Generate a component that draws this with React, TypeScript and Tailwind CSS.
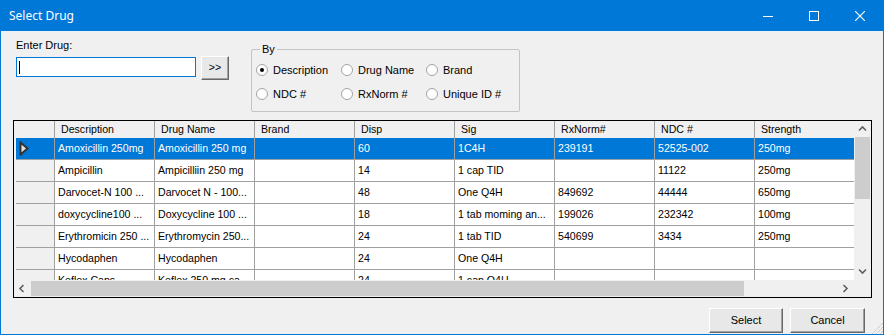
import React from "react";

const cols = ["Description", "Drug Name", "Brand", "Disp", "Sig", "RxNorm#", "NDC #", "Strength"];
const rows: string[][] = [
  ["Amoxicillin 250mg", "Amoxicillin 250 mg", "", "60", "1C4H", "239191", "52525-002", "250mg"],
  ["Ampicillin", "Ampicilliin 250 mg", "", "14", "1 cap TID", "", "11122", "250mg"],
  ["Darvocet-N 100 ...", "Darvocet N - 100...", "", "48", "One Q4H", "849692", "44444", "650mg"],
  ["doxycycline100 ...", "Doxycycline 100 ...", "", "18", "1 tab moming an...", "199026", "232342", "100mg"],
  ["Erythromicin 250 ...", "Erythromycin 250...", "", "24", "1 tab TID", "540699", "3434", "250mg"],
  ["Hycodaphen", "Hycodaphen", "", "24", "One Q4H", "", "", ""],
  ["Keflex Caps", "Keflex 250 mg ca...", "", "24", "1 cap Q4H", "", "", ""],
];

function Radio({ label, checked }: { label: string; checked?: boolean }) {
  return (
    <div className="flex items-center gap-[5px] h-[16px]">
      <svg width="12" height="12" viewBox="0 0 12 12" className="shrink-0">
        <circle cx="6" cy="6" r="5.5" fill="#ffffff" stroke="#a2a2a2" />
        {checked && <circle cx="6" cy="6" r="2" fill="#000000" />}
      </svg>
      <span className="leading-[13px]">{label}</span>
    </div>
  );
}

function Chevron({ dir }: { dir: "up" | "down" | "left" | "right" }) {
  const pts =
    dir === "up"
      ? "1,5.5 4.5,2 8,5.5"
      : dir === "down"
      ? "1,2.5 4.5,6 8,2.5"
      : dir === "left"
      ? "5.5,1 2,4.5 5.5,8"
      : "2.5,1 6,4.5 2.5,8";
  return (
    <svg width="9" height="9" viewBox="0 0 9 9">
      <polyline points={pts} fill="none" stroke="#606060" strokeWidth="1.6" />
    </svg>
  );
}

export default function App() {
  return (
    <div className="relative w-[884px] h-[335px] border border-[#0078d7] bg-[#f0f0f0] flex flex-col overflow-hidden font-['Liberation_Sans',Arial,sans-serif] text-[10.6px] text-black">
      {/* Title bar */}
      <div className="h-[30px] shrink-0 bg-[#0078d7] flex items-center">
        <div className="pl-[8px] flex-1 text-white text-[12px] font-['Segoe_UI','Noto_Sans',sans-serif]">Select Drug</div>
        <div className="w-[46px] h-[30px] flex items-center justify-center">
          <svg width="10" height="10" viewBox="0 0 10 10">
            <line x1="0" y1="5.5" x2="10" y2="5.5" stroke="#ffffff" strokeWidth="1" />
          </svg>
        </div>
        <div className="w-[46px] h-[30px] flex items-center justify-center">
          <svg width="10" height="10" viewBox="0 0 10 10">
            <rect x="0.5" y="0.5" width="9" height="9" fill="none" stroke="#ffffff" strokeWidth="1" />
          </svg>
        </div>
        <div className="w-[46px] h-[30px] flex items-center justify-center">
          <svg width="10" height="10" viewBox="0 0 10 10">
            <line x1="0" y1="0" x2="10" y2="10" stroke="#ffffff" strokeWidth="1.1" />
            <line x1="10" y1="0" x2="0" y2="10" stroke="#ffffff" strokeWidth="1.1" />
          </svg>
        </div>
      </div>

      {/* Top section */}
      <div className="flex mt-[8px] ml-[15px]">
        <div className="flex flex-col">
          <div className="h-[13px] leading-[13px] text-[11px]">Enter Drug:</div>
          <div className="flex items-start mt-[4px]">
            <div className="mt-[1px] w-[180px] h-[20px] bg-white border border-[#0078d7] flex items-center pl-[2px]">
              <div className="w-px h-[13px] bg-black" />
            </div>
            <div className="ml-[5px] w-[28px] h-[24px] flex items-center justify-center bg-[#e8e8e8] border border-t-white border-l-white border-r-[#696969] border-b-[#696969] shadow-[inset_-1px_-1px_0_#a0a0a0]">
              &gt;&gt;
            </div>
          </div>
        </div>
        <div className="relative ml-[22px] mt-[10px] w-[269px] h-[63px] border border-[#c4c4c4] rounded-[2px] text-[11px]">
          <div className="absolute left-[8px] top-[-7px] px-[2px] bg-[#f0f0f0] leading-[13px]">By</div>
          <div className="grid grid-cols-[85px_85px_85px] gap-y-[8px] pt-[12px] pl-[4px]">
            <Radio label="Description" checked />
            <Radio label="Drug Name" />
            <Radio label="Brand" />
            <Radio label="NDC #" />
            <Radio label="RxNorm #" />
            <Radio label="Unique ID #" />
          </div>
        </div>
      </div>

      {/* Grid */}
      <div className="mt-[8px] ml-[12px] w-[859px] h-[178px] shrink-0 border border-black flex flex-col">
        <div className="h-[159px] flex">
          <div className="w-[840px] h-[159px] overflow-hidden bg-white">
            <div className="flex h-[17px] bg-[#f0f0f0]">
              <div className="w-[41px] shrink-0 border-r border-[#a0a0a0]" />
              {cols.map((c) => (
                <div key={c} className="w-[100px] shrink-0 border-r border-[#a0a0a0] pl-[6px] leading-[17px] whitespace-nowrap overflow-hidden">
                  {c}
                </div>
              ))}
            </div>
            {rows.map((r, i) => {
              const sel = i === 0;
              return (
                <div key={i} className={`flex h-[22px] ${sel ? "text-white" : "text-black"}`}>
                  <div className="w-[41px] shrink-0 border-r border-[#a0a0a0] pl-[2px] bg-[#f0f0f0]">
                    <div className={`h-full border-b border-[#a0a0a0] flex items-center pl-[3px] ${sel ? "bg-[#0078d7]" : ""}`}>
                      {sel && (
                        <svg width="10" height="15" viewBox="0 0 10 15" className="shrink-0 block">
                          <polygon points="1.5,1.5 8.5,7.5 1.5,13.5" fill="#e4e4e4" stroke="#333333" strokeWidth="2" strokeLinejoin="miter" />
                        </svg>
                      )}
                    </div>
                  </div>
                  {r.map((v, j) => (
                    <div
                      key={j}
                      className={`w-[100px] shrink-0 border-r border-b border-[#a0a0a0] pl-[3px] leading-[21px] whitespace-nowrap overflow-hidden ${sel ? "bg-[#0078d7]" : "bg-white"}`}
                    >
                      {v}
                    </div>
                  ))}
                </div>
              );
            })}
          </div>
          <div className="w-[17px] h-[159px] bg-[#f0f0f0] flex flex-col">
            <div className="h-[16px] flex items-center justify-center">
              <Chevron dir="up" />
            </div>
            <div className="h-[62px] mx-[1px] bg-[#cdcdcd]" />
            <div className="flex-1" />
            <div className="h-[17px] flex items-center justify-center">
              <Chevron dir="down" />
            </div>
          </div>
        </div>
        <div className="h-[17px] flex">
          <div className="w-[840px] flex bg-[#f0f0f0]">
            <div className="w-[17px] flex items-center justify-center">
              <Chevron dir="left" />
            </div>
            <div className="w-[713px] my-[1px] bg-[#cdcdcd]" />
            <div className="flex-1" />
            <div className="w-[17px] flex items-center justify-center">
              <Chevron dir="right" />
            </div>
          </div>
          <div className="w-[17px] bg-[#f0f0f0]" />
        </div>
      </div>

      {/* Buttons */}
      <div className="mt-[10px] flex justify-end gap-[7px] pr-[18px] text-[11px]">
        <div className="w-[74px] h-[25px] flex items-center justify-center bg-[#e8e8e8] border border-t-white border-l-white border-r-[#696969] border-b-[#696969] shadow-[inset_-1px_-1px_0_#a0a0a0]">
          Select
        </div>
        <div className="w-[75px] h-[25px] flex items-center justify-center bg-[#e8e8e8] border border-t-white border-l-white border-r-[#696969] border-b-[#696969] shadow-[inset_-1px_-1px_0_#a0a0a0]">
          Cancel
        </div>
      </div>

      {/* Size grip */}
      <svg width="12" height="12" viewBox="0 0 12 12" className="absolute right-0 bottom-0">
        <line x1="12" y1="1" x2="1" y2="12" stroke="#b0b0b0" strokeWidth="1" strokeDasharray="1 1" />
        <line x1="12" y1="5" x2="5" y2="12" stroke="#b0b0b0" strokeWidth="1" strokeDasharray="1 1" />
        <line x1="12" y1="9" x2="9" y2="12" stroke="#b0b0b0" strokeWidth="1" strokeDasharray="1 1" />
      </svg>
    </div>
  );
}
